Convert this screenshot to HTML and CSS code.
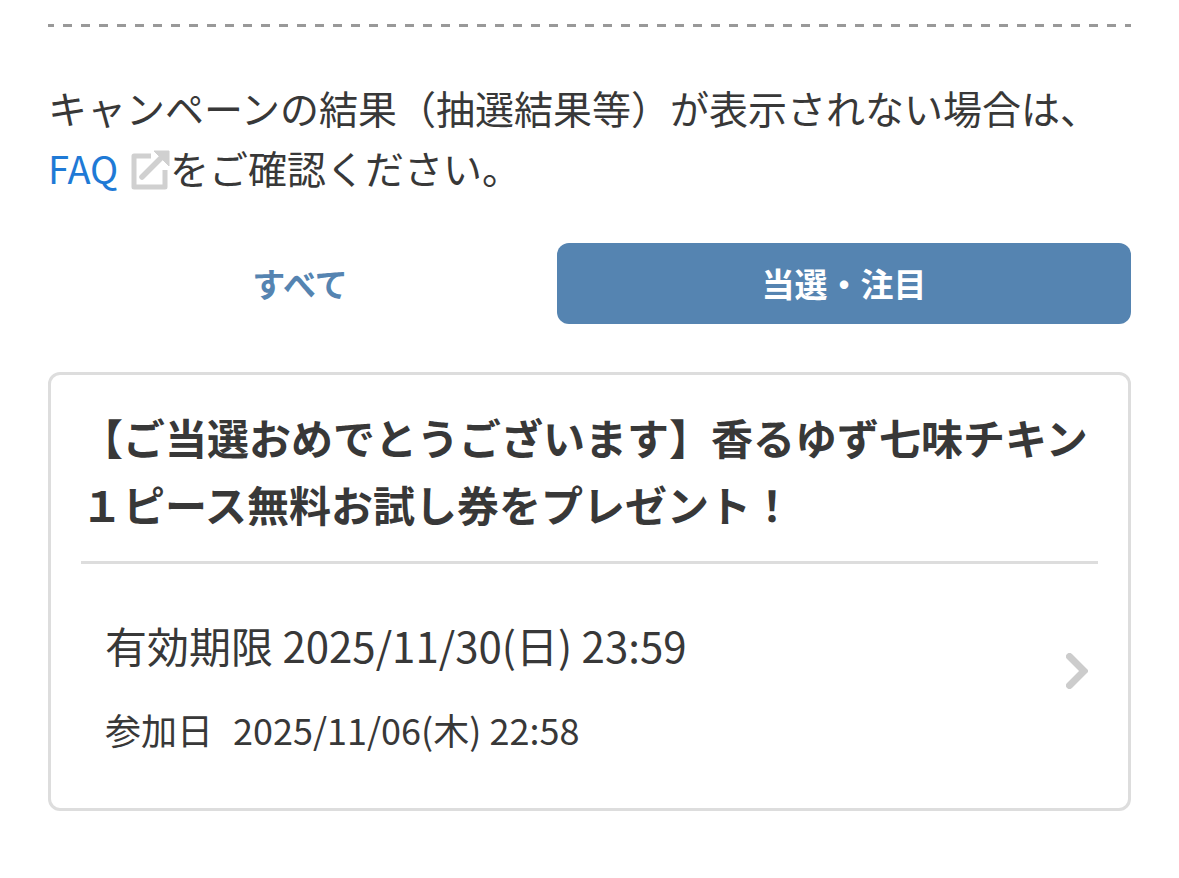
FILE: index.html
```html
<!DOCTYPE html>
<html lang="ja">
<head>
<meta charset="utf-8">
<title>キャンペーン</title>
<link rel="stylesheet" href="styles.css">
</head>
<body>
<main class="page">
  <div class="dash"></div>
  <p class="notice">キャンペーンの結果（抽選結果等）が表示されない場合は、<br><a class="link" href="#">FAQ</a> <svg class="ext" viewBox="0 0 40 40" aria-hidden="true"><path d="M21 6H4v31h31V20" fill="none" stroke="#d0d0d0" stroke-width="5" stroke-linejoin="round"/><path d="M12 27L32 7" fill="none" stroke="#d0d0d0" stroke-width="5.5" stroke-linecap="round"/><path d="M24 1h15v15z" fill="#d0d0d0" stroke="#d0d0d0" stroke-width="1" stroke-linejoin="round"/></svg>をご確認ください。</p>
  <div class="tabs">
    <button class="tab">すべて</button>
    <button class="tab active">当選・注目</button>
  </div>
  <section class="card">
    <h2 class="title">【ご当選おめでとうございます】香るゆず七味チキン１ピース無料お試し券をプレゼント！</h2>
    <div class="row">
      <div class="info">
        <div class="expiry">有効期限 2025/11/30(日) 23:59</div>
        <div class="joined"><span class="joined-label">参加日</span>2025/11/06(木) 22:58</div>
      </div>
      <svg class="chev" viewBox="0 0 22 36" aria-hidden="true"><path d="M3.5 3.5L18 18L3.5 32.5" fill="none" stroke="#cccccc" stroke-width="7" stroke-linecap="round" stroke-linejoin="miter"/></svg>
    </div>
  </section>
</main>
</body>
</html>
```
FILE: styles.css
```css
* { box-sizing: border-box; }
html, body { margin: 0; padding: 0; background: #fff; }
body {
  font-family: "Noto Sans CJK JP", "Noto Sans", sans-serif;
  color: #383838;
  height: 878px;
  overflow: hidden;
}
.page { padding: 24px 48px 0; width: 1179px; }
.dash {
  height: 3px;
  background: repeating-linear-gradient(90deg, #999 0 9px, transparent 9px 18px);
  background-position: -3px 0;
}
.notice {
  margin: 50px 0 0;
  font-size: 39px;
  line-height: 60px;
  height: 120px;
  white-space: nowrap;
}
.link { color: #1f7ad6; text-decoration: none; font-size: 38px; }
.ext { width: 40px; height: 40px; margin-left: 3px; vertical-align: -6px; }
.tabs { display: flex; justify-content: space-between; margin-top: 46px; }
.tab {
  width: 504px;
  height: 81px;
  border: 0;
  border-radius: 12px;
  background: transparent;
  color: #5584b1;
  font: 700 33px/1 "Noto Sans CJK JP", sans-serif;
}
.tab.active { width: 574px; background: #5584b1; color: #fff; }
.card {
  margin-top: 48px;
  height: 439px;
  border: 3px solid #ddd;
  border-radius: 12px;
  padding: 28px 30px 0;
}
.title {
  margin: 0;
  padding-bottom: 24px;
  border-bottom: 3px solid #ddd;
  font-size: 42px;
  line-height: 67px;
  font-weight: 700;
}
.row { display: flex; align-items: center; justify-content: space-between; padding: 51px 10px 0 24px; }
.expiry { font-size: 42px; line-height: 60px; }
.joined { font-size: 36px; line-height: 50px; margin-top: 29px; }
.joined-label { margin-right: 20px; }
.chev { width: 22px; height: 36px; margin-top: -28px; }
```
